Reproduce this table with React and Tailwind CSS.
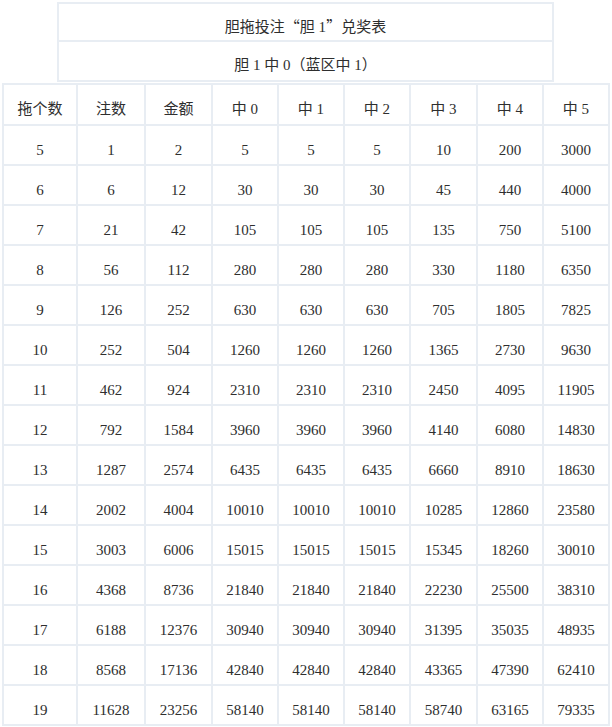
import React from "react";

const rows = [
  [5, 1, 2, 5, 5, 5, 10, 200, 3000],
  [6, 6, 12, 30, 30, 30, 45, 440, 4000],
  [7, 21, 42, 105, 105, 105, 135, 750, 5100],
  [8, 56, 112, 280, 280, 280, 330, 1180, 6350],
  [9, 126, 252, 630, 630, 630, 705, 1805, 7825],
  [10, 252, 504, 1260, 1260, 1260, 1365, 2730, 9630],
  [11, 462, 924, 2310, 2310, 2310, 2450, 4095, 11905],
  [12, 792, 1584, 3960, 3960, 3960, 4140, 6080, 14830],
  [13, 1287, 2574, 6435, 6435, 6435, 6660, 8910, 18630],
  [14, 2002, 4004, 10010, 10010, 10010, 10285, 12860, 23580],
  [15, 3003, 6006, 15015, 15015, 15015, 15345, 18260, 30010],
  [16, 4368, 8736, 21840, 21840, 21840, 22230, 25500, 38310],
  [17, 6188, 12376, 30940, 30940, 30940, 31395, 35035, 48935],
  [18, 8568, 17136, 42840, 42840, 42840, 43365, 47390, 62410],
  [19, 11628, 23256, 58140, 58140, 58140, 58740, 63165, 79335],
];

const heads = ["拖个数", "注数", "金额", "中 0", "中 1", "中 2", "中 3", "中 4", "中 5"];
const widths = [74, 68, 67, 66, 66, 66, 67, 66, 66];

export default function App() {
  return (
    <div
      className="bg-white w-[612px] h-[727px] overflow-hidden text-[#2e2e2e] text-[15px]"
      style={{ fontFamily: '"Liberation Serif", "Noto Sans CJK SC", serif' }}
    >
      <div className="ml-[57px] mt-[2px] w-[497px] border-2 border-[#e8edf3]">
        <div className="h-[38px] pt-[12px] leading-[20px] text-center border-b-2 border-[#e8edf3]">
          胆拖投注
          <span style={{ fontFamily: '"Noto Sans CJK SC", sans-serif' }}>“</span>
          胆 1
          <span style={{ fontFamily: '"Noto Sans CJK SC", sans-serif' }}>”</span>
          兑奖表
        </div>
        <div className="h-[38px] pt-[13px] leading-[20px] text-center">
          胆 1 中 0（蓝区中 1）
        </div>
      </div>
      <table className="ml-[2px] mt-[1px] table-fixed border-collapse w-[608px]">
        <colgroup>
          {widths.map((w, i) => (
            <col key={i} style={{ width: w }} />
          ))}
        </colgroup>
        <tbody>
          <tr className="h-[41px]">
            {heads.map((h, i) => (
              <td
                key={i}
                className="border-2 border-[#e8edf3] text-center align-top pt-[14px] pb-0 leading-[20px]"
              >
                {h}
              </td>
            ))}
          </tr>
          {rows.map((r, ri) => (
            <tr key={ri} className="h-[40px]">
              {r.map((v, ci) => (
                <td
                  key={ci}
                  className="border-2 border-[#e8edf3] text-center align-top pt-[14px] pb-0 leading-[20px]"
                >
                  {v}
                </td>
              ))}
            </tr>
          ))}
        </tbody>
      </table>
    </div>
  );
}
